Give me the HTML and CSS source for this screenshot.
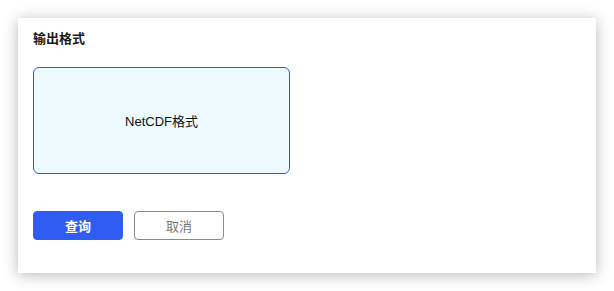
FILE: index.html
```html
<!DOCTYPE html>
<html lang="zh">
<head>
<meta charset="utf-8">
<link rel="stylesheet" href="styles.css">
</head>
<body>
<div class="card">
  <div class="title">输出格式</div>
  <div class="options">
    <div class="option selected">NetCDF格式</div>
  </div>
  <div class="actions">
    <button class="btn btn-primary">查询</button>
    <button class="btn btn-default">取消</button>
  </div>
</div>
</body>
</html>
```
FILE: styles.css
```css
html, body {
  margin: 0;
  padding: 0;
  background: #ffffff;
}
body {
  padding: 18px;
  font-family: "Noto Sans CJK SC", "Liberation Sans", sans-serif;
}
.card {
  box-sizing: border-box;
  width: 578px;
  height: 255px;
  background: #ffffff;
  box-shadow: 0 2px 14px rgba(0, 0, 0, 0.28);
  padding: 11px 15px 0;
}
.title {
  font-size: 13px;
  line-height: 18px;
  font-weight: 700;
  color: #1a1a1a;
}
.options {
  display: flex;
  margin-top: 20px;
}
.option {
  box-sizing: border-box;
  width: 257px;
  height: 107px;
  border: 1px solid #2a58f5;
  border-radius: 6px;
  background: #ecfaff;
  display: flex;
  align-items: center;
  justify-content: center;
  font-family: "Liberation Sans", "Noto Sans CJK SC", sans-serif;
  font-size: 13px;
  color: #111;
}
.actions {
  display: flex;
  gap: 11px;
  margin-top: 37px;
}
.btn {
  box-sizing: border-box;
  width: 90px;
  height: 29px;
  border-radius: 4px;
  font-family: "Noto Sans CJK SC", sans-serif;
  font-size: 13px;
  padding: 0;
  cursor: pointer;
}
.btn-primary {
  background: #2f5cf2;
  border: 1px solid #2f5cf2;
  color: #ffffff;
  font-weight: 700;
}
.btn-default {
  background: #ffffff;
  border: 1px solid #8a8a8a;
  color: #777777;
}
```
